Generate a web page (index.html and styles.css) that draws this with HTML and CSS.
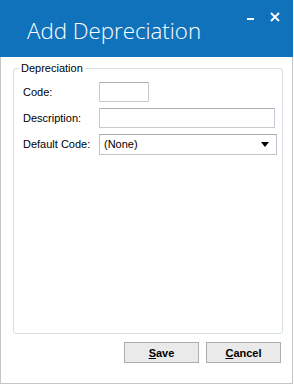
FILE: index.html
```html
<!DOCTYPE html>
<html>
<head>
<meta charset="utf-8">
<link rel="stylesheet" href="styles.css">
</head>
<body>
<div class="window">
  <div class="titlebar">
    <div class="title">Add Depreciation</div>
    <div class="controls">
      <svg class="min" width="7" height="3" viewBox="0 0 7 3"><rect x="0" y="0" width="7" height="2" fill="#fff"/></svg>
      <svg class="close" width="10" height="10" viewBox="0 0 10 10"><path d="M1 1 L9 9 M9 1 L1 9" stroke="#fff" stroke-width="1.8"/></svg>
    </div>
  </div>
  <div class="body">
    <fieldset class="group">
      <legend>Depreciation</legend>
      <div class="row">
        <label>Code:</label>
        <div class="input small"></div>
      </div>
      <div class="row">
        <label>Description:</label>
        <div class="input wide"></div>
      </div>
      <div class="row">
        <label>Default Code:</label>
        <div class="combo"><span>(None)</span><svg width="8" height="5" viewBox="0 0 8 5"><path d="M0 0 H8 L4 5 Z" fill="#000"/></svg></div>
      </div>
    </fieldset>
    <div class="buttons">
      <button class="btn"><u>S</u>ave</button>
      <button class="btn"><u>C</u>ancel</button>
    </div>
  </div>
</div>
</body>
</html>
```
FILE: styles.css
```css
html, body { margin: 0; padding: 0; background: #fff; }
body { font-family: "Liberation Sans", Arial, sans-serif; font-size: 11px; color: #000; }
.window {
  width: 293px; height: 384px; box-sizing: border-box;
  border: 1px solid #c6c6c6; border-top: none;
  display: flex; flex-direction: column;
}
.titlebar {
  background: #1172bc; height: 57px; margin: 0 -1px;
  display: flex; justify-content: space-between; align-items: flex-start;
}
.title {
  font-family: "Open Sans", Lato, sans-serif; font-weight: 300;
  color: #fff; font-size: 22.3px; padding: 15px 0 0 27px;
}
.controls { display: flex; align-items: flex-start; gap: 18px; padding: 12px 13px 0 0; }
.controls .min { margin-top: 6px; margin-right: -2px; }
.body { flex: 1; display: flex; flex-direction: column; padding: 5px 11px 0 12px; }
.group {
  margin: 0; border: 1px solid #d5dfe5; border-radius: 3px;
  padding: 8px 5px 0 9px; height: 272px; box-sizing: border-box;
}
.group legend { padding: 0 2px; margin-left: -4px; font-size: 11px; color: #000; }
.row { display: flex; align-items: center; height: 20px; margin-bottom: 6px; }
.row label { width: 76px; }
.input { height: 20px; box-sizing: border-box; border: 1px solid #c9c9cc; border-top-color: #abadb3; border-radius: 1px; background: #fff; }
.input.small { width: 50px; }
.input.wide { width: 176px; }
.combo {
  width: 178px; height: 21px; box-sizing: border-box; border: 1px solid #c3c3c6; border-top-color: #a9a9ae;
  display: flex; align-items: center; justify-content: space-between; padding: 0 7px 0 4px;
}
.buttons { display: flex; justify-content: flex-end; gap: 7px; padding-top: 8px; }
.btn {
  width: 75px; height: 21px; background: #eaeaea; border: 1px solid #adadad;
  font-family: "Liberation Sans", Arial, sans-serif; font-size: 11px; font-weight: bold; color: #000; padding: 0;
}
```
